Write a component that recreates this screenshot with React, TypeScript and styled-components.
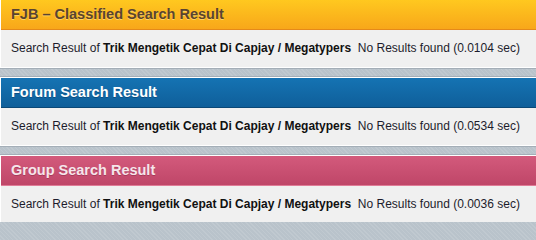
import React from "react";
import styled, { createGlobalStyle, css } from "styled-components";

const Global = createGlobalStyle`
  html, body { margin: 0; padding: 0; }
  body {
    background-color: #b9c3cb;
    background-image: repeating-linear-gradient(45deg, rgba(255,255,255,0.10) 0 1px, transparent 1px 3px);
    font-family: "Liberation Sans", Arial, sans-serif;
    width: 536px;
    height: 222px;
    overflow: hidden;
  }
`;

type Tone = "orange" | "blue" | "pink";

const tones: Record<Tone, { top: string; bottom: string; line: string; text: string; shadow: string }> = {
  orange: { top: "#ffc81f", bottom: "#f8a71a", line: "#e5891a", text: "#5a4430", shadow: "rgba(255,230,150,0.6)" },
  blue: { top: "#1573b3", bottom: "#0f5f9a", line: "#0a4877", text: "#ffffff", shadow: "rgba(0,40,80,0.4)" },
  pink: { top: "#d35a7c", bottom: "#bf4668", line: "#e07c97", text: "#f6e6eb", shadow: "rgba(90,10,40,0.3)" },
};

const Stack = styled.div`
  display: flex;
  flex-direction: column;
  gap: 9px;
`;

const Panel = styled.section<{ $first?: boolean }>`
  border: 1px solid #ffffff;
  border-right: none;
  box-shadow: 0 1px 0 #a4aeb7, 0 -1px 0 #a4aeb7;
  ${(p) =>
    p.$first &&
    css`
      border-top: none;
    `}
`;

const Header = styled.h2<{ $tone: Tone }>`
  margin: 0;
  height: 29px;
  line-height: 28px;
  padding: 0 10px;
  font-size: 14.5px;
  font-weight: bold;
  color: ${(p) => tones[p.$tone].text};
  text-shadow: 0 1px 0 ${(p) => tones[p.$tone].shadow};
  background: linear-gradient(to bottom, ${(p) => tones[p.$tone].top}, ${(p) => tones[p.$tone].bottom});
  border-bottom: 1px solid ${(p) => tones[p.$tone].line};
`;

const Body = styled.p`
  margin: 0;
  height: 37px;
  line-height: 36px;
  padding: 0 10px;
  background: #f0f0f0;
  font-size: 12px;
  color: #1c1c2c;
  white-space: nowrap;
`;

const Query = styled.b`
  color: #111;
`;

const sections: { tone: Tone; title: string; time: string }[] = [
  { tone: "orange", title: "FJB \u2013 Classified Search Result", time: "0.0104" },
  { tone: "blue", title: "Forum Search Result", time: "0.0534" },
  { tone: "pink", title: "Group Search Result", time: "0.0036" },
];

export default function App() {
  return (
    <>
      <Global />
      <Stack>
        {sections.map((s, i) => (
          <Panel key={s.tone} $first={i === 0}>
            <Header $tone={s.tone}>{s.title}</Header>
            <Body>
              {"Search Result of "}
              <Query>Trik Mengetik Cepat Di Capjay / Megatypers</Query>
              {"\u00a0 No Results found (" + s.time + " sec)"}
            </Body>
          </Panel>
        ))}
      </Stack>
    </>
  );
}
